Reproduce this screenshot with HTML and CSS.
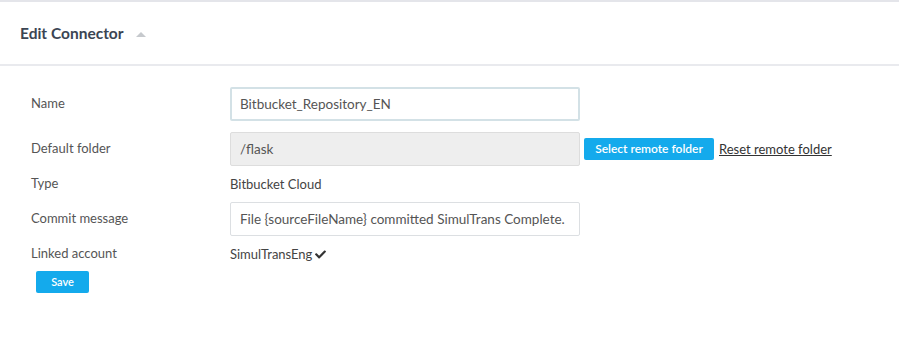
FILE: index.html
```html
<!DOCTYPE html>
<html>
    <head>
        <title>Edit Connector</title>
        <link rel="stylesheet" href="styles.css">
    </head>
    <body>
        <div class="panel">
            <div class="panelHeader">
                <span class="panelTitle">Edit Connector</span>
                <span class="caretUp"></span>
            </div>

            <div class="panelBody">
                <div class="formRow">
                    <div class="formLabel">Name</div>
                    <div class="formValue">
                        <input class="textInput focused" type="text" value="Bitbucket_Repository_EN">
                    </div>
                </div>

                <div class="formRow">
                    <div class="formLabel">Default folder</div>
                    <div class="formValue">
                        <input class="textInput readOnly" type="text" value="/flask" readonly>
                        <div class="button smallButton">Select remote folder</div>
                        <a class="resetLink" href="#">Reset remote folder</a>
                    </div>
                </div>

                <div class="formRow textRow">
                    <div class="formLabel">Type</div>
                    <div class="formValue">Bitbucket Cloud</div>
                </div>

                <div class="formRow">
                    <div class="formLabel">Commit message</div>
                    <div class="formValue">
                        <input class="textInput" type="text" value="File {sourceFileName} committed SimulTrans Complete.">
                    </div>
                </div>

                <div class="formRow textRow">
                    <div class="formLabel">Linked account</div>
                    <div class="formValue">
                        SimulTransEng
                        <svg class="checkIcon" viewBox="0 0 512 512"><path d="M173.9 439.4l-166.4-166.4c-10-10-10-26.2 0-36.2l36.2-36.2c10-10 26.2-10 36.2 0L192 312.7 432.1 72.6c10-10 26.2-10 36.2 0l36.2 36.2c10 10 10 26.2 0 36.2l-294.4 294.4c-10 10-26.2 10-36.2 0z"/></svg>
                    </div>
                </div>

                <div class="saveRow">
                    <div class="button saveButton">Save</div>
                </div>
            </div>
        </div>
    </body>
</html>
```

FILE: styles.css
```css
body {
    margin: 0px;
    font-family: "Lato", "Open Sans", sans-serif;
    color: #555;
    background-color: white;
    border-top: 2px solid #e4e5ea;
}
.panelHeader {
    display: flex;
    align-items: center;
    height: 62px;
    padding: 0 20px;
    border-bottom: 2px solid #e9eaee;
}
.panelTitle {
    font-weight: bold;
    font-size: 15.5px;
    color: #3b4553;
}
.caretUp {
    width: 0;
    height: 0;
    margin: 2px 0 0 12px;
    border-left: 5px solid transparent;
    border-right: 5px solid transparent;
    border-bottom: 5px solid #c6c9cd;
}
.panelBody {
    display: flex;
    flex-direction: column;
    gap: 11px;
    padding: 21px 0 44px 31px;
    font-size: 13px;
}
.formRow {
    display: flex;
    align-items: center;
}
.textRow {
    height: 14px;
}
.formLabel {
    width: 199px;
    flex-shrink: 0;
    margin-top: -3px;
}
.formValue {
    display: flex;
    align-items: center;
    color: #444;
}
.textInput {
    box-sizing: border-box;
    width: 350px;
    height: 34px;
    padding: 0 9px;
    font-family: inherit;
    font-size: 13.5px;
    color: #555;
    background-color: white;
    border: 1px solid #dcdfe2;
    border-radius: 2px;
    outline: none;
}
.focused {
    border: 2px solid #d3e1e6;
    padding: 0 8px;
}
.readOnly {
    background-color: #eeeeee;
    border-color: #dddddd;
}
.button {
    box-sizing: border-box;
    height: 22px;
    line-height: 22px;
    padding: 0 10px;
    border-radius: 2px;
    background-color: #14aaec;
    color: white;
    font-size: 12px;
    font-weight: 600;
    text-align: center;
    cursor: pointer;
    user-select: none;
}
.smallButton {
    width: 130px;
    margin-left: 4px;
    padding: 0;
}
.resetLink {
    margin-left: 5px;
    color: #333;
    font-size: 13px;
}
.checkIcon {
    width: 11px;
    height: 11px;
    margin-left: 3px;
    fill: #333;
}
.saveRow {
    display: flex;
    padding-left: 5px;
    margin-top: -1px;
}
.saveButton {
    width: 53px;
    padding: 0;
    font-size: 11px;
}
```
